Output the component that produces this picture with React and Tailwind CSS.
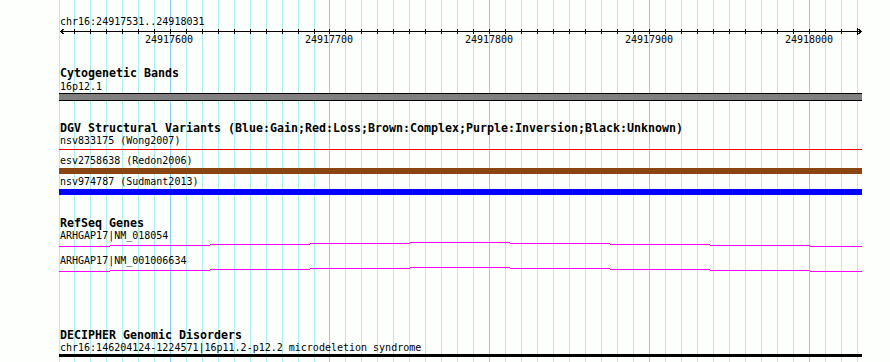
import React from "react";

const gridXs = Array.from({ length: 50 }, (_, k) => Math.floor(74.3 + 15.98 * k));
const majorK = new Set([6, 16, 26, 36, 46]);
const majorLabels = [
  { x: 169, t: "24917600" },
  { x: 329, t: "24917700" },
  { x: 489, t: "24917800" },
  { x: 649, t: "24917900" },
  { x: 809, t: "24918000" },
];

function Grid() {
  return (
    <svg
      className="absolute inset-0"
      width="890"
      height="362"
      shapeRendering="crispEdges"
    >
      <rect x="59" y="0" width="1" height="362" fill="#afeeee" />
      {gridXs.map((x, k) => (
        <rect
          key={k}
          x={x}
          y="0"
          width="1"
          height="362"
          fill={majorK.has(k) ? "#87cefa" : "#afeeee"}
        />
      ))}
    </svg>
  );
}

function Ruler() {
  return (
    <svg width="890" height="19" className="block" shapeRendering="crispEdges">
      <rect x="60" y="4" width="802" height="1" fill="#000" />
      {gridXs.map((x, k) => (
        <rect key={k} x={x} y="2" width="1" height="5" fill="#000" />
      ))}
      <path d="M64.5 1.5 L60.5 4.5 L64.5 7.5" stroke="#000" strokeWidth="1" fill="none" />
      <path d="M857.5 1.5 L861.5 4.5 L857.5 7.5" stroke="#000" strokeWidth="1" fill="none" />
      {majorLabels.map((l) => (
        <text
          key={l.t}
          x={l.x}
          y="16"
          textAnchor="middle"
          fontFamily="'DejaVu Sans Mono', monospace"
          fontSize="10"
          fill="#000"
        >
          {l.t}
        </text>
      ))}
    </svg>
  );
}

const hatSegs = [
  [59, 110, 4],
  [110, 210, 3],
  [210, 310, 2],
  [310, 410, 1],
  [410, 510, 0],
  [510, 610, 1],
  [610, 710, 2],
  [710, 810, 3],
  [810, 862, 4],
];

function Transcript() {
  return (
    <svg width="803" height="5" className="block ml-[59px]" shapeRendering="crispEdges">
      {hatSegs.map(([a, b, y], i) => (
        <rect key={i} x={a - 59} y={y} width={b - a} height="1" fill="#ff00ff" />
      ))}
    </svg>
  );
}

function Small({ children, className = "" }) {
  return (
    <div className={`pl-[60px] h-[11px] leading-[11px] text-[10px] whitespace-nowrap ${className}`}>
      {children}
    </div>
  );
}

function Title({ children, className = "" }) {
  return (
    <div className={`pl-[60px] h-[14px] leading-[14px] text-[11.63px] font-bold whitespace-nowrap ${className}`}>
      {children}
    </div>
  );
}

export default function App() {
  return (
    <div className="relative w-[890px] h-[362px] overflow-hidden bg-[#fdfffd] text-black font-['DejaVu_Sans_Mono',monospace]">
      <Grid />
      <div className="relative flex flex-col pt-[16px]">
        <Small>chr16:24917531..24918031</Small>
        <Ruler />

        <Title className="mt-[20px]">Cytogenetic Bands</Title>
        <Small className="mt-[1px]">16p12.1</Small>
        <div className="mt-[1px] ml-[59px] w-[803px] h-[8px] bg-[#808080] border-y border-black" />

        <Title className="mt-[20px]">
          DGV Structural Variants (Blue:Gain;Red:Loss;Brown:Complex;Purple:Inversion;Black:Unknown)
        </Title>
        <Small>nsv833175 (Wong2007)</Small>
        <div className="mt-[3px] ml-[59px] w-[803px] h-[1px] bg-[#ff0000]" />
        <Small className="mt-[5px]">esv2758638 (Redon2006)</Small>
        <div className="mt-[2px] ml-[59px] w-[803px] h-[6px] bg-[#8b4513]" />
        <Small className="mt-[2px]">nsv974787 (Sudmant2013)</Small>
        <div className="mt-[2px] ml-[59px] w-[803px] h-[6px] bg-[#0000ff]" />

        <Title className="mt-[21px]">RefSeq Genes</Title>
        <Small>ARHGAP17|NM_018054</Small>
        <div className="mt-[1px]">
          <Transcript />
        </div>
        <Small className="mt-[8px]">ARHGAP17|NM_001006634</Small>
        <div className="mt-[1px]">
          <Transcript />
        </div>

        <Title className="mt-[56px]">DECIPHER Genomic Disorders</Title>
        <Small>chr16:146204124-1224571|16p11.2-p12.2 microdeletion syndrome</Small>
        <div className="mt-[1px] ml-[59px] w-[803px] h-[3px] bg-black" />
      </div>
    </div>
  );
}
